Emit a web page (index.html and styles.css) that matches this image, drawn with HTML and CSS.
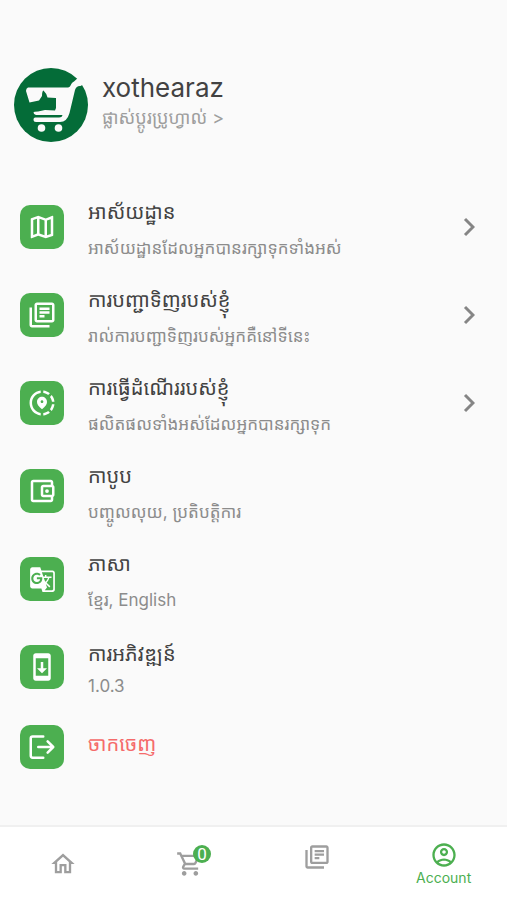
FILE: index.html
```
<!DOCTYPE html>
<html lang="km">
  <head>
    <meta charset="utf-8" />
    <meta name="viewport" content="width=device-width, initial-scale=1" />
    <title>Account</title>
    <link rel="stylesheet" href="styles.css">
  </head>

  <body>
    <header class="profile">
      <svg class="avatar" viewBox="0 0 74 74" aria-hidden="true">
        <circle cx="37" cy="37" r="37" fill="#046c38" />
        <path fill="#fafafa" d="M14 19.500H54C57 19.500 56.500 15 60 13.500L65 9L70 16L66.500 18Q62.500 17.500 61 22L55.500 45Q53 54 46 54H22Q19.500 54 19.500 51.500T22 49.500H45Q48 49.500 48.500 47H22Q19.500 46 19.500 44.500Q20 43.500 24 43.500L31 42L41 42.500L42 40V30L33.500 29.500Q33 26 29.500 22.500Q28 23 28 28L25 32.500L15.500 34.500L12 23Q12 20 14 19.500Z" />
        <circle cx="27.500" cy="60" r="3.800" fill="#fafafa" />
        <circle cx="44.500" cy="60" r="3.800" fill="#fafafa" />
      </svg>
      <div class="profile-text">
        <h1>xothearaz</h1>
        <a href="#profile">ផ្លាស់ប្ដូរប្រូហ្វាល់ &gt;</a>
      </div>
    </header>

    <main class="menu">
      <a class="row" href="#address">
        <span class="tile">
          <svg viewBox="0 0 24 24"><path d="M20.500 3l-.16.030L15 5.100 9 3 3.360 4.900c-.21.070-.36.250-.36.480V20.500c0 .28.22.5.5.5l.16-.03L9 18.900l6 2.100 5.640-1.900c.21-.07.36-.25.36-.48V3.500c0-.28-.22-.5-.5-.5zM10 5.470l4 1.400v11.660l-4-1.400V5.470zm-5 .990l3-1.010v11.700l-3 1.160V6.460zm14 11.080l-3 1.010V6.860l3-1.160v11.840z" /></svg>
        </span>
        <span class="text">
          <span class="title">អាស័យដ្ឋាន</span>
          <span class="sub">អាស័យដ្ឋានដែលអ្នកបានរក្សាទុកទាំងអស់</span>
        </span>
        <svg class="chevron" viewBox="0 0 12 20"><path d="M2 2l8 8-8 8" /></svg>
      </a>
      <a class="row" href="#orders">
        <span class="tile">
          <svg viewBox="0 0 24 24"><path d="M4 6H2v14c0 1.100.9 2 2 2h14v-2H4V6zm16-4H8c-1.100 0-2 .9-2 2v12c0 1.100.9 2 2 2h12c1.100 0 2-.9 2-2V4c0-1.100-.9-2-2-2zm0 14H8V4h12v12zM10 9h8v2h-8zm0 3h4v2h-4zm0-6h8v2h-8z" /></svg>
        </span>
        <span class="text">
          <span class="title">ការបញ្ជាទិញរបស់ខ្ញុំ</span>
          <span class="sub">រាល់ការបញ្ជាទិញរបស់អ្នកគឺនៅទីនេះ</span>
        </span>
        <svg class="chevron" viewBox="0 0 12 20"><path d="M2 2l8 8-8 8" /></svg>
      </a>
      <a class="row" href="#trips">
        <span class="tile">
          <svg viewBox="0 0 24 24"><path d="M13.020 19.930v2.020c2.010-.2 3.840-1 5.320-2.210l-1.420-1.430c-1.110.86-2.440 1.440-3.900 1.620zM4.030 12c0-4.050 3.030-7.410 6.950-7.930V2.050C5.950 2.580 2.030 6.840 2.030 12c0 5.160 3.920 9.420 8.950 9.950v-2.020c-3.920-.52-6.950-3.880-6.950-7.930zm15.920-1h2.020c-.2-2.010-1-3.840-2.210-5.320l-1.430 1.430c.86 1.100 1.440 2.430 1.620 3.890zm-1.610-6.740c-1.480-1.210-3.320-2.010-5.320-2.210v2.020c1.460.18 2.790.76 3.900 1.620l1.420-1.430zm-.01 12.640l1.430 1.420c1.210-1.480 2.010-3.310 2.210-5.320h-2.020c-.18 1.460-.76 2.790-1.620 3.900zM16 11.100C16 8.610 14.100 7 12 7s-4 1.610-4 4.100c0 1.660 1.330 3.630 4 5.900 2.670-2.270 4-4.240 4-5.900zm-4 .9c-.59 0-1.070-.48-1.070-1.070s.48-1.070 1.070-1.070 1.070.48 1.070 1.070S12.590 12 12 12z" /></svg>
        </span>
        <span class="text">
          <span class="title">ការធ្វើដំណើររបស់ខ្ញុំ</span>
          <span class="sub">ផលិតផលទាំងអស់ដែលអ្នកបានរក្សាទុក</span>
        </span>
        <svg class="chevron" viewBox="0 0 12 20"><path d="M2 2l8 8-8 8" /></svg>
      </a>
      <a class="row" href="#wallet">
        <span class="tile">
          <svg viewBox="0 0 24 24"><path d="M21 7.280V5c0-1.100-.9-2-2-2H5c-1.110 0-2 .9-2 2v14c0 1.100.89 2 2 2h14c1.100 0 2-.9 2-2v-2.280c.59-.35 1-.98 1-1.720V9c0-.74-.41-1.370-1-1.720zM20 9v6h-7V9h7zM5 19V5h14v2h-6c-1.100 0-2 .9-2 2v6c0 1.100.9 2 2 2h6v2H5z" /><circle cx="16" cy="12" r="1.500" /></svg>
        </span>
        <span class="text">
          <span class="title">កាបូប</span>
          <span class="sub">បញ្ចូលលុយ, ប្រតិបត្តិការ</span>
        </span>
      </a>
      <a class="row" href="#language">
        <span class="tile">
          <svg class="small" viewBox="0 0 24 24"><path d="M21 4H11l-1-3H3c-1.100 0-2 .9-2 2v15c0 1.100.9 2 2 2h8l1 3h9c1.100 0 2-.9 2-2V6c0-1.100-.9-2-2-2zM7 16c-2.760 0-5-2.240-5-5s2.240-5 5-5c1.350 0 2.480.5 3.350 1.300L9.030 8.570c-.38-.36-1.040-.78-2.030-.78-1.740 0-3.150 1.440-3.150 3.210S5.260 14.210 7 14.210c2.010 0 2.840-1.440 2.920-2.410H7v-1.710h4.680c.07.31.12.61.12 1.020C11.800 13.970 9.890 16 7 16zm6.170-5.420h3.700c-.43 1.250-1.110 2.430-2.050 3.470-.31-.35-.6-.72-.86-1.100l-.79-2.370zm8.330 9.920c0 .55-.45 1-1 1H14l2-2.500-1.040-3.100 3.100 3.100.92-.92-3.300-3.250.02-.02c1.130-1.250 1.930-2.690 2.400-4.220H20v-1.300h-4.530V8h-1.290v1.290h-1.440L11.460 5.500h9.040c.55 0 1 .45 1 1v14z" /></svg>
        </span>
        <span class="text">
          <span class="title">ភាសា</span>
          <span class="sub">ខ្មែរ, English</span>
        </span>
      </a>
      <a class="row" href="#update">
        <span class="tile">
          <svg viewBox="0 0 24 24"><path d="M17 1.010L7 1c-1.100 0-2 .9-2 2v18c0 1.100.9 2 2 2h10c1.100 0 2-.9 2-2V3c0-1.100-.9-1.990-2-1.990zM17 19H7V5h10v14zm-1-6h-3V8h-2v5H8l4 4 4-4z" /></svg>
        </span>
        <span class="text compact">
          <span class="title">ការអភិវឌ្ឍន៍</span>
          <span class="sub">1.0.3</span>
        </span>
      </a>
      <button class="row logout" type="button">
        <span class="tile">
          <svg class="line" viewBox="0 0 24 24"><path d="M13 3.500H4.500A1.500 1.500 0 0 0 3 5V19A1.500 1.500 0 0 0 4.500 20.500H13M9 12H20.500M16.500 7.500L21 12L16.500 16.500" /></svg>
        </span>
        <span class="title">ចាកចេញ</span>
      </button>
    </main>

    <nav class="tabs">
      <a href="#home" aria-label="Home">
        <svg viewBox="0 0 24 24"><path d="M12 5.690l5 4.500V18h-2v-6H9v6H7v-7.810l5-4.500M12 3L2 12h3v8h6v-6h2v6h6v-8h3L12 3z" /></svg>
      </a>
      <a href="#cart" aria-label="Cart">
        <span class="cart">
          <svg viewBox="0 0 24 24"><path d="M15.550 13c.75 0 1.410-.41 1.750-1.030l3.580-6.490c.37-.66-.11-1.480-.87-1.480H5.210l-.94-2H1v2h2l3.600 7.590-1.350 2.440C4.520 15.370 5.480 17 7 17h12v-2H7l1.100-2h7.450zM6.160 6h12.150l-2.760 5H8.530L6.160 6zM7 18c-1.100 0-1.990.9-1.990 2S5.900 22 7 22s2-.9 2-2-.9-2-2-2zm10 0c-1.100 0-1.990.9-1.990 2s.89 2 1.990 2 2-.9 2-2-.9-2-2-2z" /></svg>
          <span class="badge">0</span>
        </span>
      </a>
      <a class="raised" href="#orders" aria-label="Orders">
        <svg viewBox="0 0 24 24"><path d="M4 6H2v14c0 1.100.9 2 2 2h14v-2H4V6zm16-4H8c-1.100 0-2 .9-2 2v12c0 1.100.9 2 2 2h12c1.100 0 2-.9 2-2V4c0-1.100-.9-2-2-2zm0 14H8V4h12v12zM10 9h8v2h-8zm0 3h4v2h-4zm0-6h8v2h-8z" /></svg>
      </a>
      <a class="active" href="#account">
        <svg viewBox="0 0 24 24"><path d="M12 2C6.480 2 2 6.480 2 12s4.480 10 10 10 10-4.480 10-10S17.520 2 12 2zM7.350 18.500C8.660 17.560 10.260 17 12 17s3.340.56 4.650 1.500C15.340 19.440 13.740 20 12 20s-3.340-.56-4.650-1.500zm10.790-1.380C16.450 15.800 14.320 15 12 15s-4.450.8-6.140 2.120C4.700 15.730 4 13.950 4 12c0-4.420 3.580-8 8-8s8 3.580 8 8c0 1.950-.7 3.730-1.860 5.120zM12 6c-1.930 0-3.500 1.570-3.500 3.500S10.070 13 12 13s3.500-1.570 3.500-3.500S13.930 6 12 6zm0 5c-.83 0-1.500-.67-1.500-1.500S11.170 8 12 8s1.500.67 1.500 1.500S12.830 11 12 11z" /></svg>
        <span>Account</span>
      </a>
    </nav>
  </body>
</html>
```

FILE: styles.css
```
* {
  box-sizing: border-box;
  margin: 0;
  padding: 0;
}

body {
  display: flex;
  flex-direction: column;
  min-height: 100vh;
  background-color: #fafafa;
  color: #424242;
  font-family: Inter, "Noto Sans Khmer", "Khmer OS", sans-serif;
}

a {
  color: inherit;
  text-decoration: none;
}

.profile {
  display: flex;
  align-items: center;
  gap: 14px;
  padding: 68px 14px 0;
}

.profile-text {
  padding-bottom: 6px;
}

.avatar {
  flex: none;
  width: 74px;
  height: 74px;
}

.profile h1 {
  font-size: 26px;
  font-weight: 400;
  line-height: 32px;
}

.profile a {
  display: block;
  color: #9e9e9e;
  font-size: 18px;
  line-height: 28px;
}

.menu {
  flex: 1;
  padding: 41px 20px 0;
}

.row {
  display: flex;
  align-items: center;
  gap: 24px;
  width: 100%;
  height: 88px;
  padding-right: 12px;
  border: 0;
  background: none;
  color: inherit;
  font: inherit;
  text-align: left;
}

.row.logout {
  height: 72px;
  color: #f56b6b;
}

.logout .title {
  padding-bottom: 6px;
}

.tile {
  display: flex;
  flex: none;
  align-items: center;
  justify-content: center;
  width: 44px;
  height: 44px;
  border-radius: 10px;
  background-color: #4caf50;
}

.tile svg {
  width: 30px;
  height: 30px;
  fill: #fff;
}

.tile .small {
  width: 27px;
  height: 27px;
}

.tile .line {
  fill: none;
  stroke: #fff;
  stroke-width: 2;
  stroke-linecap: round;
  stroke-linejoin: round;
}

.text {
  display: flex;
  flex: 1;
  flex-direction: column;
  gap: 8px;
  padding-top: 6px;
}

.title {
  font-size: 20px;
  line-height: 28px;
  white-space: nowrap;
}

.sub {
  color: #8c8c8c;
  font-size: 17px;
  line-height: 28px;
  white-space: nowrap;
}

.compact {
  gap: 4px;
}

.chevron {
  flex: none;
  width: 12px;
  height: 20px;
  fill: none;
  stroke: #858585;
  stroke-width: 3;
}

.tabs {
  display: flex;
  height: 75px;
  border-top: 2px solid #f0f0f0;
  background-color: #fff;
  color: #9e9e9e;
}

.tabs a {
  display: flex;
  flex: 1;
  flex-direction: column;
  align-items: center;
  justify-content: center;
}

.tabs svg {
  display: block;
  width: 28px;
  height: 28px;
  fill: currentColor;
}

.tabs .raised {
  padding-bottom: 14px;
}

.tabs .active {
  color: #4caf50;
  font-size: 14px;
  line-height: 18px;
}

.cart {
  position: relative;
}

.badge {
  position: absolute;
  top: -5px;
  right: -7px;
  width: 18px;
  height: 18px;
  border-radius: 50%;
  background-color: #4caf50;
  color: #fff;
  font-family: Roboto, sans-serif;
  font-size: 17px;
  line-height: 18px;
  text-align: center;
}
```
